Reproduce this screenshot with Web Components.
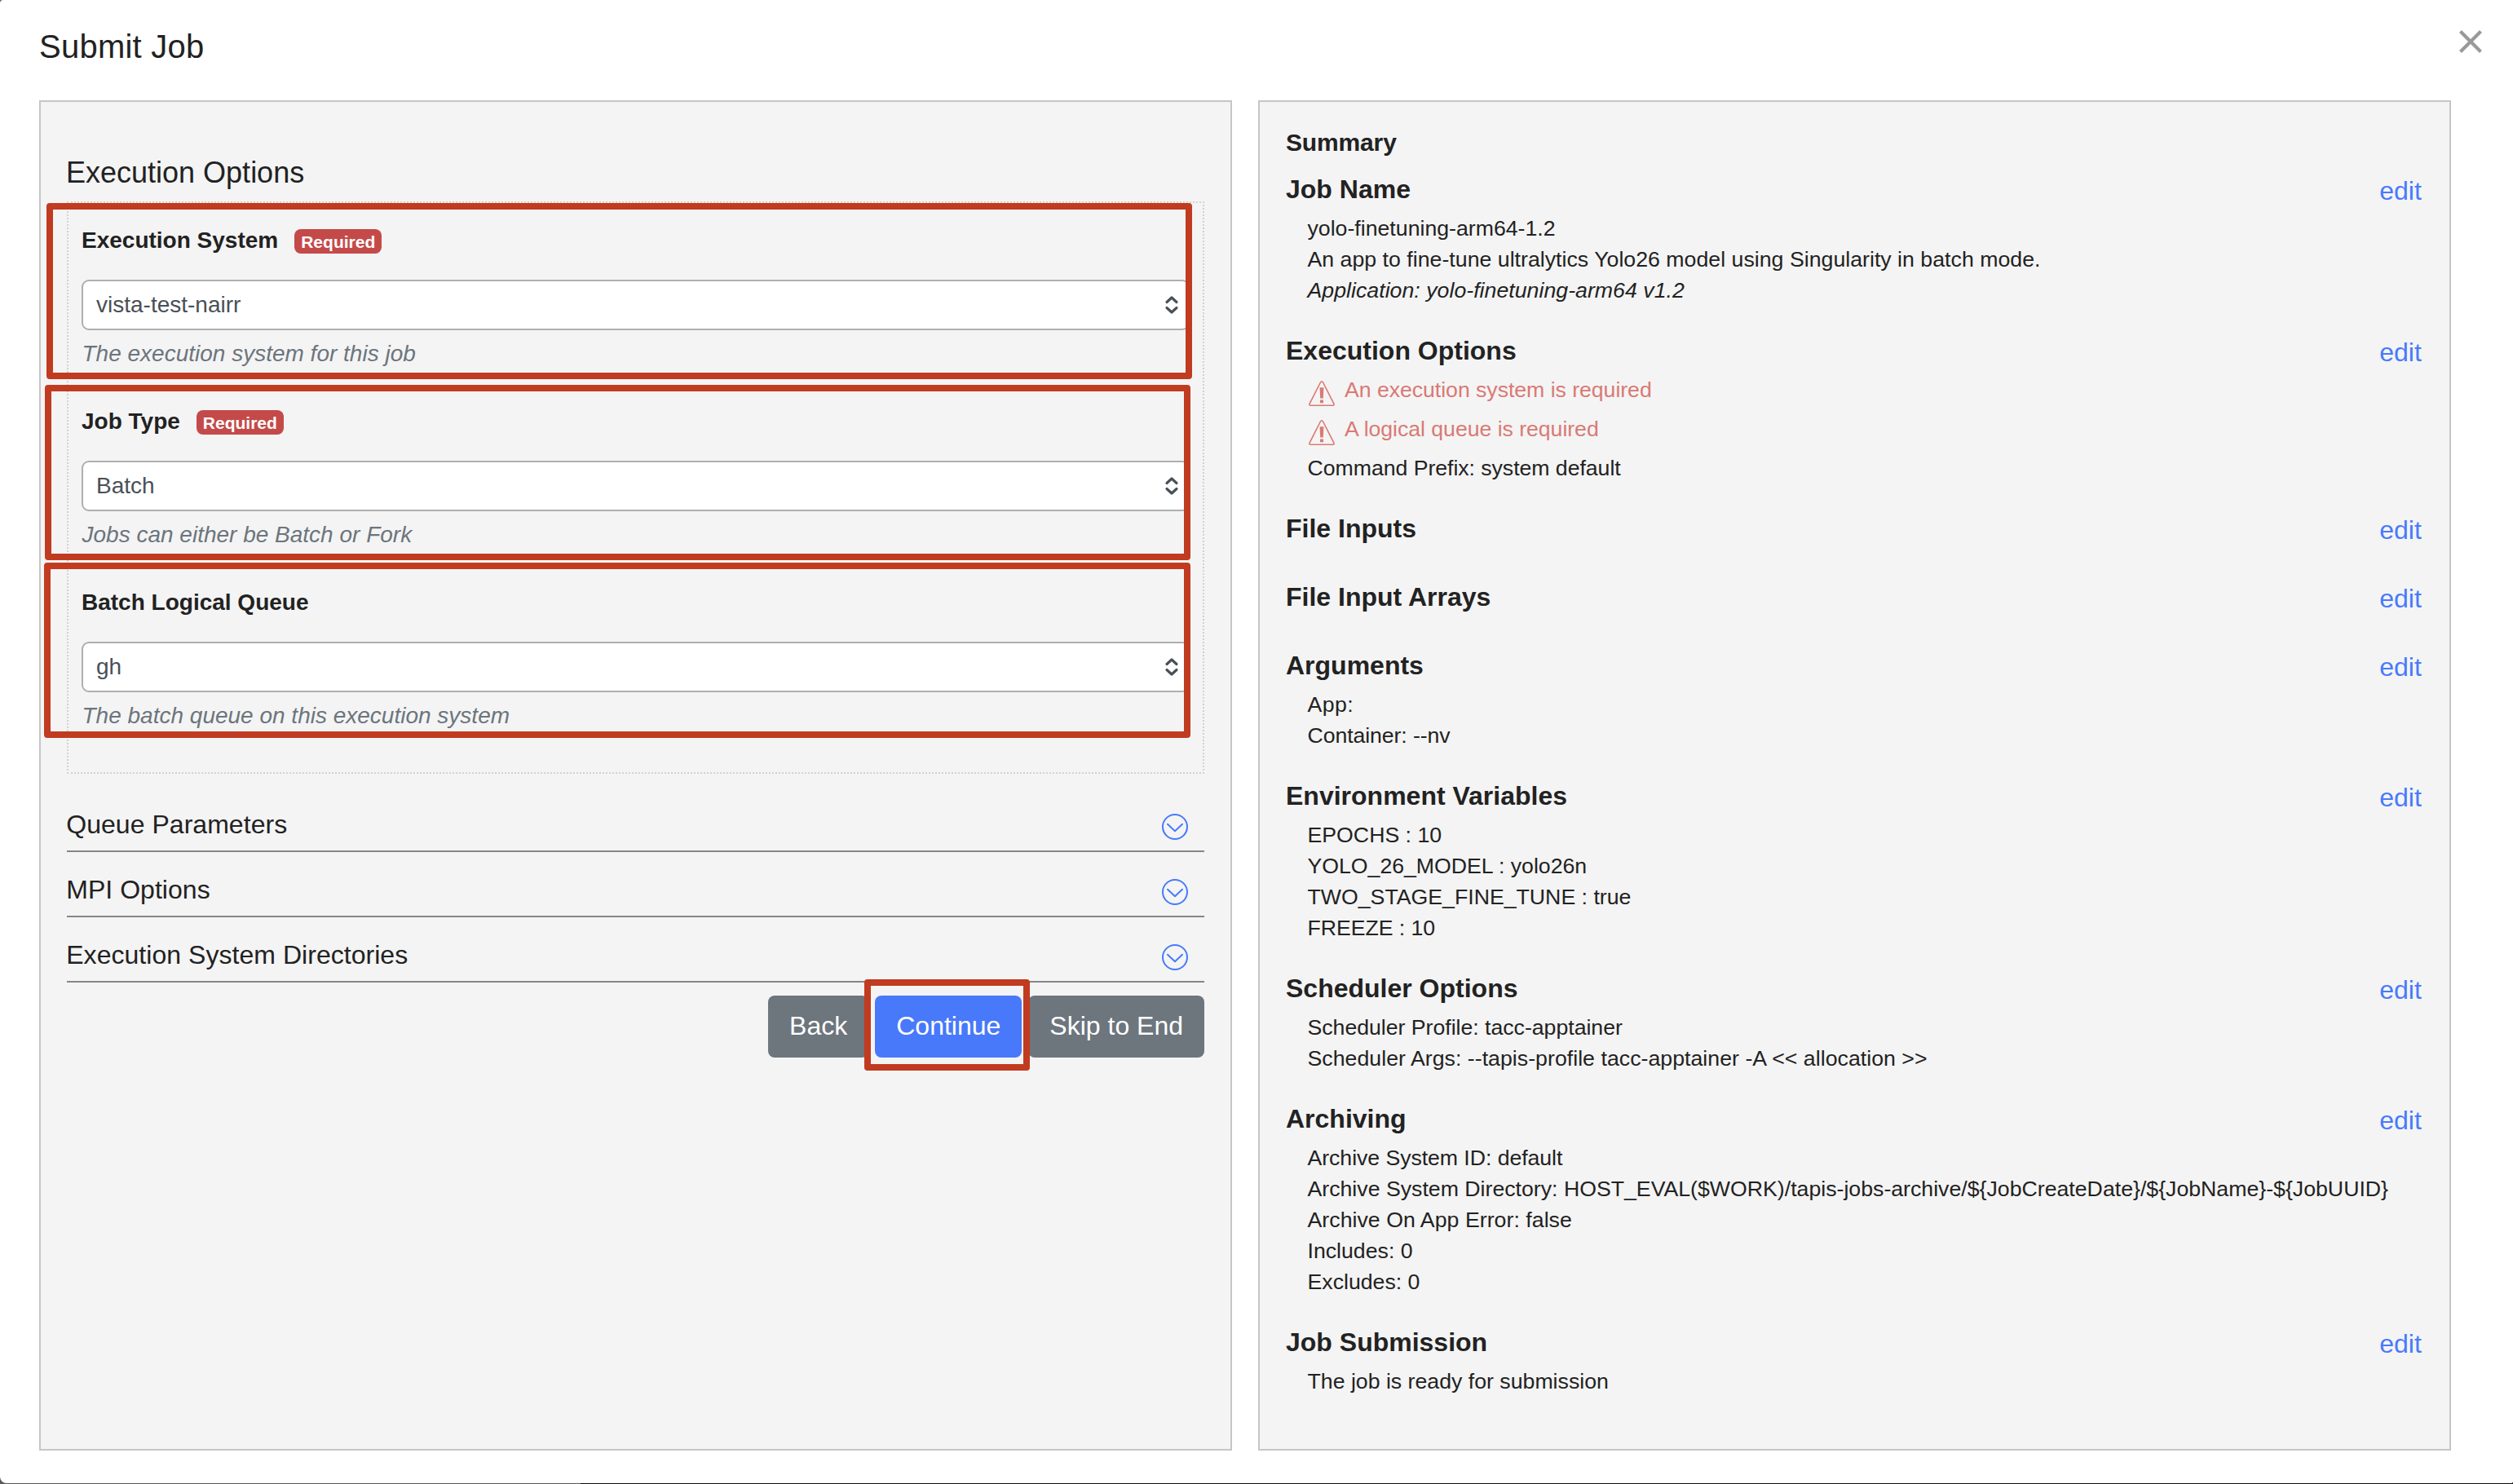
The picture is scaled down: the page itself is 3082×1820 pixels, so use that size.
<!DOCTYPE html>
<html lang="en">
<head>
<meta charset="utf-8">
<title>Submit Job</title>
<style>
html,body{margin:0;height:100%}
body{font-family:"Liberation Sans",Arial,sans-serif;color:#222;background:linear-gradient(90deg,#5a5a5a 712px,#0c0c0c 712px);height:1820px;overflow:hidden}
</style>
</head>
<body>
<job-modal>
  <span slot="title">Submit Job</span>
  <job-panel>
    <step-form>
      <span slot="heading">Execution Options</span>
      <form-field required value="vista-test-nairr"><span slot="label">Execution System</span><span slot="help">The execution system for this job</span><mark-box style="left:-43px;top:-16px;width:1405px;height:216px"></mark-box></form-field>
      <form-field required value="Batch"><span slot="label">Job Type</span><span slot="help">Jobs can either be Batch or Fork</span><mark-box style="left:-45.5px;top:-15px;width:1405.5px;height:215px"></mark-box></form-field>
      <form-field value="gh"><span slot="label">Batch Logical Queue</span><span slot="help">The batch queue on this execution system</span><mark-box style="left:-46px;top:-19px;width:1405.5px;height:215px"></mark-box></form-field>
      <fold-row slot="folds">Queue Parameters</fold-row>
      <fold-row slot="folds">MPI Options</fold-row>
      <fold-row slot="folds">Execution System Directories</fold-row>
      <step-button slot="actions">Back</step-button>
      <step-button slot="actions" primary>Continue<mark-box slot="mark" style="left:-13px;top:-20px;width:202.5px;height:112px"></mark-box></step-button>
      <step-button slot="actions">Skip to End</step-button>
    </step-form>
  </job-panel>
  <job-panel>
    <job-summary>
      <summary-section><span slot="name">Job Name</span>
        <summary-item>yolo-finetuning-arm64-1.2</summary-item>
        <summary-item style="letter-spacing:.018px">An app to fine-tune ultralytics Yolo26 model using Singularity in batch mode.</summary-item>
        <summary-item style="font-style:italic;letter-spacing:.025px">Application: yolo-finetuning-arm64 v1.2</summary-item>
      </summary-section>
      <summary-section><span slot="name">Execution Options</span>
        <summary-item warning style="letter-spacing:-.05px">An execution system is required</summary-item>
        <summary-item warning style="letter-spacing:-.05px">A logical queue is required</summary-item>
        <summary-item style="letter-spacing:-.049px">Command Prefix: system default</summary-item>
      </summary-section>
      <summary-section><span slot="name">File Inputs</span></summary-section>
      <summary-section><span slot="name">File Input Arrays</span></summary-section>
      <summary-section><span slot="name">Arguments</span>
        <summary-item style="letter-spacing:.4px">App:</summary-item>
        <summary-item style="letter-spacing:-.098px">Container: --nv</summary-item>
      </summary-section>
      <summary-section><span slot="name">Environment Variables</span>
        <summary-item>EPOCHS : 10</summary-item>
        <summary-item style="letter-spacing:-.024px">YOLO_26_MODEL : yolo26n</summary-item>
        <summary-item>TWO_STAGE_FINE_TUNE : true</summary-item>
        <summary-item style="letter-spacing:-.058px">FREEZE : 10</summary-item>
      </summary-section>
      <summary-section><span slot="name">Scheduler Options</span>
        <summary-item style="letter-spacing:-.025px">Scheduler Profile: tacc-apptainer</summary-item>
        <summary-item style="letter-spacing:.031px">Scheduler Args: --tapis-profile tacc-apptainer -A &lt;&lt; allocation &gt;&gt;</summary-item>
      </summary-section>
      <summary-section><span slot="name">Archiving</span>
        <summary-item style="letter-spacing:-.062px">Archive System ID: default</summary-item>
        <summary-item>Archive System Directory: HOST_EVAL($WORK)/tapis-jobs-archive/${JobCreateDate}/${JobName}-${JobUUID}</summary-item>
        <summary-item style="letter-spacing:.038px">Archive On App Error: false</summary-item>
        <summary-item>Includes: 0</summary-item>
        <summary-item>Excludes: 0</summary-item>
      </summary-section>
      <summary-section><span slot="name">Job Submission</span>
        <summary-item>The job is ready for submission</summary-item>
      </summary-section>
    </job-summary>
  </job-panel>
</job-modal>
<script>
const define = (name, render) => customElements.define(name, class extends HTMLElement {
  constructor() { super(); this.attachShadow({ mode: 'open' }); }
  connectedCallback() { this.shadowRoot.innerHTML = render(this); }
});

define('job-modal', () => `<style>
  :host{display:flex;flex-direction:column;box-sizing:border-box;height:1819px;padding:0 76px 40px 48px;background:#fff;border-radius:4px 0 2px 8px}
  header{display:flex;justify-content:space-between;height:90.4px;padding-top:32.6px;font-size:40px;line-height:48px;letter-spacing:.24px}
  svg{width:28px;height:28px;margin:4.4px -38px 0 0}
  main{display:grid;grid-template-columns:1fr 1fr;gap:32px;flex:1}
</style>
<header><slot name="title"></slot><svg viewBox="0 0 28 28" fill="none" stroke="#999" stroke-width="4.2"><path d="M1.5 1.5 26.5 26.5M26.5 1.5 1.5 26.5"/></svg></header>
<main><slot></slot></main>`);

define('job-panel', () => `<style>
  :host{display:block;box-sizing:border-box;min-width:0;border:2px solid #c6c6c6;background:#f4f4f4;padding:28.6px 32px 0}
</style><slot></slot>`);

define('step-form', () => `<style>
  :host{display:block}
  h2{margin:36px 0 13.4px -1px;font-size:36px;font-weight:400;line-height:44px}
  .fields{border:2px dotted #d2d2d2;padding:16px;margin-bottom:16px}
  .actions{display:flex;justify-content:flex-end;gap:8px;margin-top:16px}
</style>
<h2><slot name="heading"></slot></h2>
<div class="fields"><slot></slot></div>
<slot name="folds"></slot>
<div class="actions"><slot name="actions"></slot></div>`);

define('form-field', el => `<style>
  :host{display:block;position:relative;height:222px;font-size:28px}
  .label{display:flex;align-items:center;height:60px;margin-bottom:18px;font-weight:700;line-height:62px}
  .badge{height:30px;line-height:31.5px;margin-left:20px;padding:0 8px;border-radius:8px;background:#c44a4a;color:#fff;font-size:21px;margin-top:2px}
  .select{display:flex;align-items:center;justify-content:space-between;box-sizing:border-box;height:62px;padding:0 11px 0 16px;border:2px solid #afafaf;border-radius:9px;background:#fff;color:#495057;line-height:58px}
  .help{padding-left:.5px;line-height:58px;font-style:italic;color:#6c757d}
  svg{width:18px;height:24px}
</style>
<div class="label"><slot name="label"></slot>${el.hasAttribute('required') ? '<span class="badge">Required</span>' : ''}</div>
<div class="select"><span>${el.getAttribute('value')}</span><svg viewBox="0 0 18 24" fill="none" stroke="#495057" stroke-width="3.2" stroke-linecap="round" stroke-linejoin="round"><path d="M3 8.5 9 3 15 8.5M3 15.5 9 21 15 15.5"/></svg></div>
<div class="help"><slot name="help"></slot></div>
<slot></slot>`);

define('mark-box', () => `<style>
  :host{position:absolute;z-index:2;box-sizing:border-box;border:8px solid #c13b20;border-radius:4px}
</style>`);

define('fold-row', () => `<style>
  :host{display:flex;justify-content:space-between;box-sizing:border-box;height:80px;padding:27px 19px 0 0;border-bottom:2px solid #868686;font-size:32px;line-height:38px}
  span{margin-left:-.8px;letter-spacing:.04px}
  svg{width:34px;height:34px;margin-top:5px}
</style><span><slot></slot></span>
<svg viewBox="0 0 34 34" fill="none" stroke="#487afb" stroke-width="2" stroke-linecap="round" stroke-linejoin="round"><circle cx="17" cy="17" r="15"/><path d="M8 13.7 17 22.3 26 13.7"/></svg>`);

define('step-button', el => `<style>
  :host{display:block;position:relative;box-sizing:border-box;height:76px;padding:0 26px;border-radius:8px;background:${el.hasAttribute('primary') ? '#4879fa' : '#6d757d'};color:#fff;font-size:32px;line-height:74px;white-space:nowrap}
</style><slot></slot><slot name="mark"></slot>`);

define('job-summary', () => `<style>
  :host{display:block}
  h3{margin:0 0 17.8px;font-size:30px;line-height:42px;letter-spacing:-.15px}
</style><h3>Summary</h3><slot></slot>`);

define('summary-section', () => `<style>
  :host{display:block;margin-bottom:36px}
  .head{display:flex;justify-content:space-between;height:48px;font-size:32px;line-height:38.4px}
  .name{font-weight:700}
  a{color:#487afb;margin:2px 2.2px 0 0}
  .items{padding-left:26.5px}
</style><div class="head"><span class="name"><slot name="name"></slot></span><a>edit</a></div><div class="items"><slot></slot></div>`);

define('summary-item', el => el.hasAttribute('warning') ? `<style>
  :host{display:flex;gap:11.5px;height:48px;font-size:26.7px;line-height:38px;color:#d97a74;white-space:nowrap}
  svg{width:34px;height:34px;margin-top:5.5px}
</style><svg viewBox="0 0 34 34"><path d="M17 2.8Q18 2.8 18.6 4L32 30.4Q32.5 32.2 30.8 32.2H3.2Q1.5 32.2 2 30.4L15.4 4Q16 2.8 17 2.8Z" fill="none" stroke="currentColor" stroke-width="1.6"/><path d="M14.6 10.2H19.4L18.8 23.6H15.2ZM15 25.6H19V29.2H15Z" fill="currentColor"/></svg><span><slot></slot></span>` : `<style>
  :host{display:block;height:38px;font-size:26.7px;line-height:38px;white-space:nowrap}
</style><slot></slot>`);
</script>
</body>
</html>
